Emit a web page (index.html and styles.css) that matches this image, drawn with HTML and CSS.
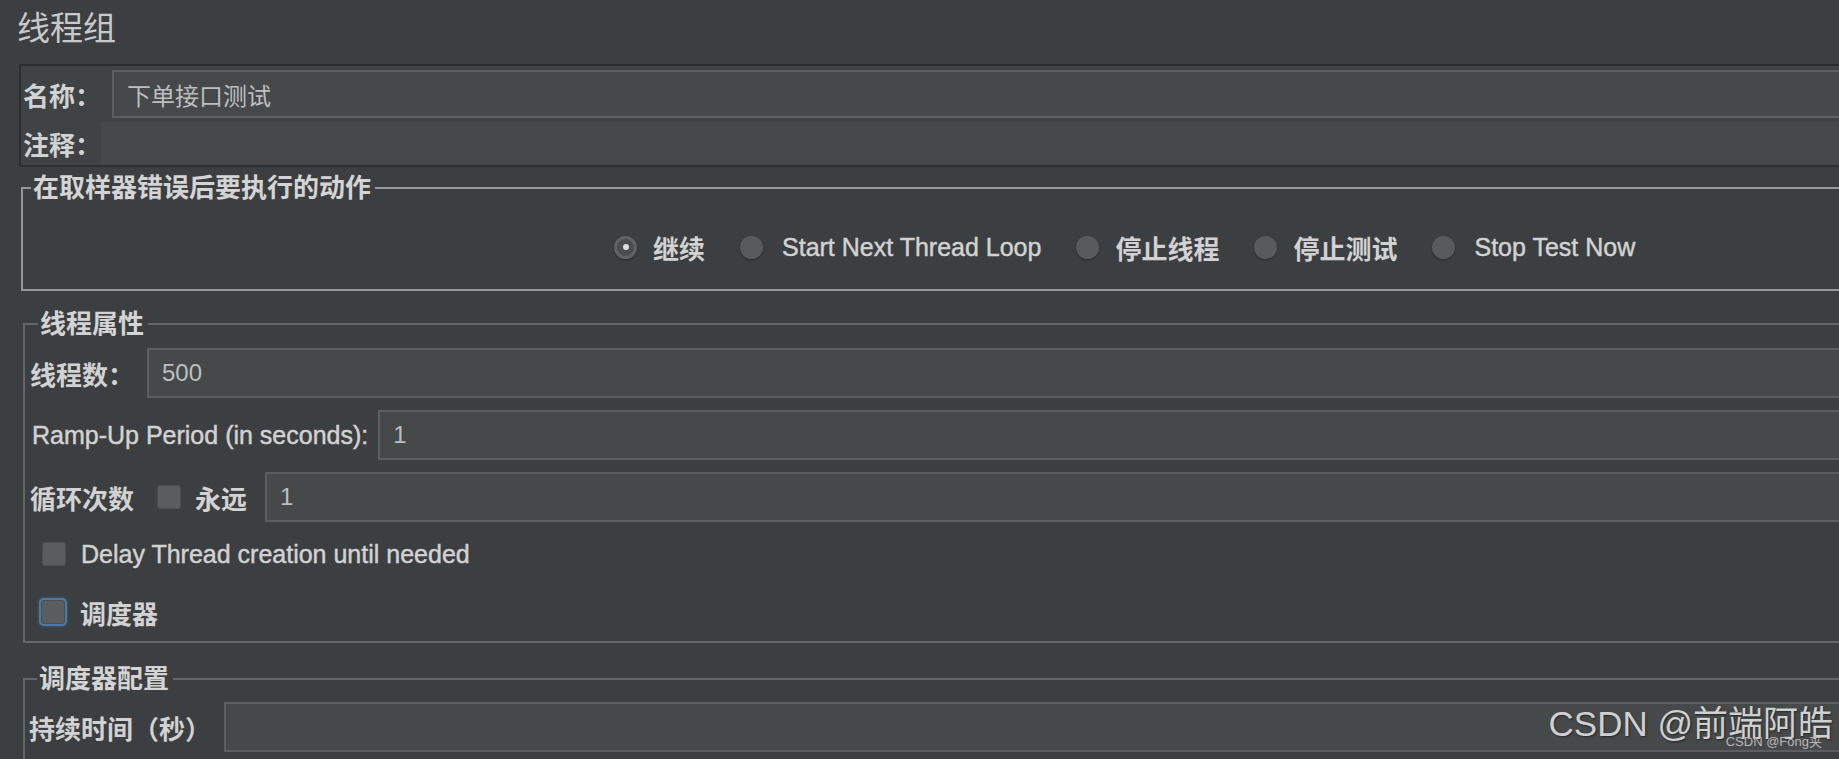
FILE: index.html
```html
<!DOCTYPE html>
<html lang="zh-CN">
<head>
  <meta charset="UTF-8">
  <title>线程组</title>
  <link rel="stylesheet" href="styles.css">
</head>
<body>
  <div class="page">
    <h1 class="title">线程组</h1>

    <div class="name-panel">
      <div class="name-row">
        <label class="cn name-label">名称：</label>
        <input class="field" type="text" value="下单接口测试">
      </div>
      <div class="comment-row">
        <label class="cn comment-label">注释：</label>
        <div class="comment-field"></div>
      </div>
    </div>

    <fieldset class="group group-error">
      <legend class="cn">在取样器错误后要执行的动作</legend>
      <div class="radios">
        <label class="radio"><span class="dot checked"></span><span class="cn">继续</span></label>
        <label class="radio"><span class="dot"></span><span class="en">Start Next Thread Loop</span></label>
        <label class="radio"><span class="dot"></span><span class="cn">停止线程</span></label>
        <label class="radio"><span class="dot"></span><span class="cn">停止测试</span></label>
        <label class="radio"><span class="dot"></span><span class="en">Stop Test Now</span></label>
      </div>
    </fieldset>

    <fieldset class="group group-thread">
      <legend class="cn">线程属性</legend>
      <div class="row">
        <label class="cn threads-label">线程数：</label>
        <input class="field" type="text" value="500">
      </div>
      <div class="row">
        <label class="en ramp-label">Ramp-Up Period (in seconds):</label>
        <input class="field" type="text" value="1">
      </div>
      <div class="row">
        <label class="cn">循环次数</label>
        <span class="box loop-box"></span>
        <label class="cn forever-label">永远</label>
        <input class="field" type="text" value="1">
      </div>
      <div class="check-row delay-row">
        <span class="box"></span>
        <label class="en">Delay Thread creation until needed</label>
      </div>
      <div class="check-row sched-row">
        <span class="box focused"></span>
        <label class="cn">调度器</label>
      </div>
    </fieldset>

    <fieldset class="group group-sched">
      <legend class="cn">调度器配置</legend>
      <div class="row">
        <label class="cn duration-label">持续时间（秒）</label>
        <input class="field" type="text" value="">
      </div>
    </fieldset>
  </div>

  <div class="watermark">CSDN @前端阿皓<span class="watermark-small">CSDN @Fong夹</span></div>
</body>
</html>
```

FILE: styles.css
```css
html, body {
  margin: 0;
  height: 100%;
  overflow: hidden;
}
body {
  background: #3c3f41;
  color: #d2d2d2;
  font-family: "Liberation Sans", "Noto Sans CJK SC", sans-serif;
  font-size: 25px;
  position: relative;
}
.page {
  width: 2200px;
  padding-top: 12px;
}
.cn {
  font-weight: 700;
  font-size: 26px;
  white-space: nowrap;
}
.en {
  -webkit-text-stroke: 0.45px currentColor;
  white-space: nowrap;
}
.title {
  margin: 0 0 18px 17px;
  font-size: 33px;
  line-height: 34px;
  font-weight: 400;
  color: #c9c9c9;
}

/* name / comment */
.name-panel {
  margin-left: 19px;
  border: 2px solid #2c2e30;
  border-right: none;
  background: #404345;
  padding: 4px 0 0 2px;
}
.name-row {
  display: flex;
  align-items: center;
  height: 48px;
}
.name-label {
  width: 89px;
  flex: none;
}
.comment-row {
  display: flex;
  align-items: center;
  height: 43px;
  margin-top: 4px;
}
.comment-label {
  width: 78px;
  flex: none;
}
.comment-field {
  flex: 1;
  align-self: stretch;
  background: #45494a;
}

.field {
  flex: 1;
  height: 100%;
  box-sizing: border-box;
  margin: 0;
  padding: 0 13px;
  border: 2px solid #5c5f61;
  background: #45494a;
  color: #bcbfc0;
  font-family: "Liberation Sans", "Noto Sans CJK SC", sans-serif;
  font-size: 24px;
  outline: none;
}

/* titled groups */
.group {
  margin: 0;
  padding: 0;
  border: 2px solid #646769;
  border-right: none;
  min-width: 0;
}
.group legend {
  margin-left: 8px;
  padding: 0 4px 0 2px;
  line-height: 26px;
  color: #d4d4d4;
}
.group-error {
  margin: 8px 0 0 21px;
  padding: 31px 0 27px 0;
  border-color: #979797;
}
.group-thread {
  margin: 20px 0 0 23px;
  padding: 11px 0 12px 5px;
}
.group-sched {
  margin: 23px 0 0 23px;
  padding: 10px 0 0 4px;
}

/* radios */
.radios {
  display: flex;
  align-items: center;
  height: 30px;
  margin-left: 591px;
  gap: 35px;
}
.radio {
  display: flex;
  align-items: center;
  gap: 16px;
}
.radio .en {
  margin-left: 3px;
}
.dot {
  width: 23px;
  height: 23px;
  border-radius: 50%;
  background: #585b5d;
  box-shadow: 0 1px 2px rgba(0,0,0,0.35);
  display: flex;
  align-items: center;
  justify-content: center;
}
.dot.checked {
  background: #4a4d4f;
  border: 3px solid #606365;
  box-sizing: border-box;
}
.dot.checked::after {
  content: "";
  width: 6px;
  height: 6px;
  border-radius: 50%;
  background: #dedede;
}

/* rows */
.row {
  display: flex;
  align-items: center;
  height: 50px;
  margin-bottom: 12px;
}
.threads-label {
  width: 117px;
  flex: none;
}
.ramp-label {
  margin-left: 2px;
  margin-right: 10px;
}
.loop-box {
  margin: 0 14px 0 23px;
}
.forever-label {
  margin-right: 18px;
}
.duration-label {
  width: 195px;
  flex: none;
}
.group-thread .row:nth-of-type(3) {
  margin-bottom: 0;
}

.box {
  width: 24px;
  height: 24px;
  flex: none;
  box-sizing: border-box;
  border-radius: 3px;
  background: #5a5d5f;
  border: 1px solid #4c4f51;
}
.box.focused {
  box-shadow: 0 0 0 2px #4b7aa8, 0 0 3px 2px rgba(90,140,200,0.5);
}
.check-row {
  display: flex;
  align-items: center;
  height: 34px;
  gap: 15px;
  padding-left: 12px;
}
.delay-row {
  margin-top: 15px;
}
.sched-row {
  margin-top: 24px;
  padding-left: 11px;
}

/* watermark over the page */
.watermark {
  position: absolute;
  right: 6px;
  bottom: 13px;
  font-size: 35px;
  color: #d0d0d0;
  text-shadow: 1px 1px 2px rgba(0,0,0,0.45);
  white-space: nowrap;
}
.watermark-small {
  position: absolute;
  right: 11px;
  bottom: -4px;
  font-size: 13px;
  color: #b8b8b8;
  text-shadow: none;
}
```
